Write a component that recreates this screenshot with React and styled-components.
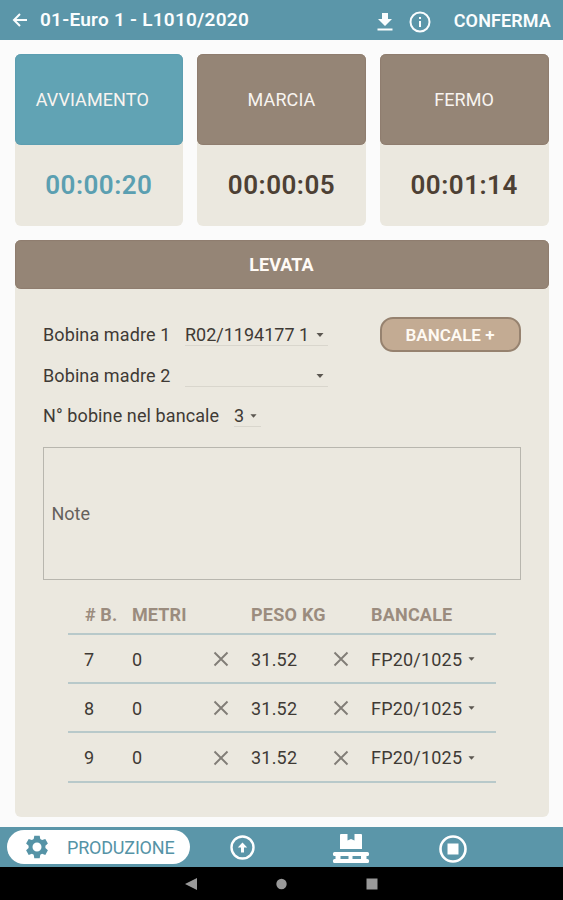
import React from "react";
import styled, { createGlobalStyle } from "styled-components";

const Global = createGlobalStyle`
  * { box-sizing: border-box; }
  body {
    margin: 0;
    background: #fbfbfb;
    font-family: Roboto, "Liberation Sans", sans-serif;
    font-size: 18px;
    color: #3f3a35;
  }
`;

const Screen = styled.div`
  width: 563px;
  height: 900px;
  display: flex;
  flex-direction: column;
  overflow: hidden;
`;

const TopBar = styled.header`
  height: 40px;
  flex: none;
  display: flex;
  align-items: center;
  padding: 0 12px;
  background: #5b96a9;
  color: #fafdfe;
  font-weight: 500;
  svg { flex: none; }
`;

const Title = styled.h1`
  margin: 0 auto 0 11px;
  padding-bottom: 1px;
  font-size: 19px;
  font-weight: 600;
  letter-spacing: 0.25px;
  white-space: nowrap;
`;

const IconGroup = styled.div`
  display: flex;
  align-items: center;
  gap: 15px;
  padding-top: 3px;
  margin-right: 23px;
`;

const ConfirmButton = styled.button`
  border: 0;
  padding: 0;
  background: none;
  color: inherit;
  font: 600 18px Roboto, sans-serif;
  letter-spacing: 0.12px;
`;

const Content = styled.main`
  flex: 1;
  display: flex;
  flex-direction: column;
  gap: 14px;
  padding: 14px 14.5px 10px 14.5px;
`;

const Timers = styled.section`
  display: grid;
  grid-template-columns: repeat(3, 1fr);
  gap: 14px;
  height: 172px;
`;

const TimerCard = styled.article`
  display: flex;
  flex-direction: column;
  background: #ebe8df;
  border-radius: 6px;
`;

const TimerName = styled.div`
  height: 91px;
  display: flex;
  align-items: center;
  justify-content: center;
  padding-right: ${(p) => (p.$active ? "13px" : "0")};
  border-radius: 6px;
  background: ${(p) => (p.$active ? "#61a3b4" : "#958576")};
  color: #f8f4f0;
  letter-spacing: 0.1px;
  box-shadow: inset 0 0 1px 0.5px ${(p) => (p.$active ? "#5899ad" : "#8a7768")};
`;

const TimerValue = styled.div`
  flex: 1;
  display: flex;
  align-items: center;
  justify-content: center;
  padding-bottom: 1px;
  font-size: 26px;
  font-weight: 600;
  letter-spacing: 0.5px;
  color: ${(p) => (p.$active ? "#5b9fb1" : "#4d4034")};
`;

const Panel = styled.section`
  flex: 1;
  display: flex;
  flex-direction: column;
  background: #ebe8df;
  border-radius: 6px;
`;

const PanelTitle = styled.h2`
  margin: 0;
  height: 49px;
  display: flex;
  align-items: center;
  justify-content: center;
  border-radius: 6px;
  background: #958576;
  box-shadow: inset 0 0 1px 0.5px #8a7768;
  color: #fffaf5;
  font-size: 18px;
  font-weight: 700;
`;

const PanelBody = styled.div`
  padding: 27px 28px 0 28.5px;
`;

const FormRow = styled.div`
  height: 40.7px;
  display: flex;
  align-items: flex-start;
`;

const Label = styled.label`
  width: ${(p) => p.$width}px;
  height: 38px;
  line-height: 38px;
  letter-spacing: 0.1px;
  white-space: nowrap;
`;

const Select = styled.div`
  width: ${(p) => p.$width}px;
  height: 30px;
  display: flex;
  align-items: flex-end;
  justify-content: space-between;
  padding-right: ${(p) => p.$pad}px;
  border-bottom: 1px solid #d9d6cd;
  line-height: 20px;
  svg { margin-bottom: 8px; }
`;

const PalletButton = styled.button`
  width: 141px;
  height: 35px;
  margin: 1px 0 0 auto;
  padding: 0;
  border: 2px solid #96826f;
  border-radius: 13px;
  background: #c3ab93;
  color: #fffaf3;
  font: 600 17px Roboto, sans-serif;
`;

const Note = styled.div`
  height: 133px;
  margin-top: 9px;
  display: flex;
  align-items: center;
  padding: 0 7.5px;
  border: 1px solid #b8b6ae;
  color: #65615c;
`;

const Table = styled.div`
  margin: 14px 24.5px 0 25px;
`;

const TableRow = styled.div`
  display: grid;
  grid-template-columns: 64px 80px 39px 81px 39px 1fr;
  align-items: center;
  height: ${(p) => (p.$head ? "41px" : "49.2px")};
  padding-top: ${(p) => (p.$head ? "2px" : "1px")};
  border-bottom: 2px solid #b8c9ca;
  color: ${(p) => (p.$head ? "#9b8c7e" : "inherit")};
  font-weight: ${(p) => (p.$head ? 700 : 400)};
  white-space: nowrap;
`;

const Cell = styled.span`
  display: flex;
  align-items: center;
  gap: 6px;
  padding-left: ${(p) => p.$indent || 0}px;
  letter-spacing: ${(p) => p.$spacing || "0.1px"};
`;

const TabBar = styled.nav`
  height: 40px;
  flex: none;
  display: flex;
  align-items: center;
  padding-left: 7px;
  background: #5b96a9;
  color: #fff;
`;

const ActiveTab = styled.div`
  width: 183px;
  height: 34px;
  display: flex;
  align-items: center;
  gap: 18px;
  padding-left: 18px;
  border-radius: 17px;
  background: #fff;
  color: #5593a6;
  letter-spacing: -0.2px;
`;

const Tab = styled.div`
  display: flex;
  margin-left: ${(p) => p.$gap}px;
  padding-top: ${(p) => p.$drop || 0}px;
`;

const SystemBar = styled.footer`
  height: 33px;
  flex: none;
  display: flex;
  align-items: center;
  justify-content: center;
  gap: 79px;
  background: #000;
  color: #999;
`;

const Caret = ({ small }) => (
  <svg width={small ? 7 : 8} height="4" viewBox="0 0 8 4">
    <path d="M0.5 0h7L4 4z" fill="#5b5751" />
  </svg>
);

const Cross = () => (
  <svg width="16" height="16" viewBox="0 0 16 16" fill="none" stroke="#817d77" strokeWidth="1.9">
    <path d="M1.5 1.5l13 13M14.5 1.5l-13 13" />
  </svg>
);

const timers = [
  { name: "AVVIAMENTO", value: "00:00:20", active: true },
  { name: "MARCIA", value: "00:00:05" },
  { name: "FERMO", value: "00:01:14" },
];

const reels = [7, 8, 9];

export default function App() {
  return (
    <Screen>
      <Global />
      <TopBar>
        <svg width="17" height="16" viewBox="0 0 17 16" fill="none" stroke="currentColor" strokeWidth="2">
          <path d="M15 8H2.5M8 2L2 8l6 6" />
        </svg>
        <Title>01-Euro 1 - L1010/2020</Title>
        <IconGroup>
          <svg width="18" height="20" viewBox="0 0 18 20" fill="currentColor">
            <path d="M6 1h6v6h4l-7 7-7-7h4zM1.5 16.5h15v2h-15z" />
          </svg>
          <svg width="22" height="22" viewBox="0 0 22 22" fill="none" stroke="currentColor" strokeWidth="2">
            <circle cx="11" cy="11" r="9.5" />
            <path d="M11 10v6M11 6v2" />
          </svg>
        </IconGroup>
        <ConfirmButton>CONFERMA</ConfirmButton>
      </TopBar>

      <Content>
        <Timers>
          {timers.map((t) => (
            <TimerCard key={t.name}>
              <TimerName $active={t.active}>{t.name}</TimerName>
              <TimerValue $active={t.active}>{t.value}</TimerValue>
            </TimerCard>
          ))}
        </Timers>

        <Panel>
          <PanelTitle>LEVATA</PanelTitle>
          <PanelBody>
            <FormRow>
              <Label $width={142}>Bobina madre 1</Label>
              <Select $width={143} $pad={4}>R02/1194177 1 <Caret /></Select>
              <PalletButton>BANCALE +</PalletButton>
            </FormRow>
            <FormRow>
              <Label $width={142}>Bobina madre 2</Label>
              <Select $width={143} $pad={4}><span /><Caret /></Select>
            </FormRow>
            <FormRow>
              <Label $width={191}>N° bobine nel bancale</Label>
              <Select $width={27} $pad={4}>3 <Caret small /></Select>
            </FormRow>
            <Note>Note</Note>
            <Table>
              <TableRow $head>
                <Cell $indent={17}># B.</Cell>
                <Cell>METRI</Cell>
                <Cell />
                <Cell $spacing="0.25px">PESO KG</Cell>
                <Cell />
                <Cell $spacing="0.2px">BANCALE</Cell>
              </TableRow>
              {reels.map((n) => (
                <TableRow key={n}>
                  <Cell $indent={16}>{n}</Cell>
                  <Cell>0</Cell>
                  <Cell $indent={1}><Cross /></Cell>
                  <Cell $spacing="0.2px">31.52</Cell>
                  <Cell $indent={1}><Cross /></Cell>
                  <Cell $spacing="0.2px">FP20/1025 <Caret small /></Cell>
                </TableRow>
              ))}
            </Table>
          </PanelBody>
        </Panel>
      </Content>

      <TabBar>
        <ActiveTab>
          <svg width="24" height="24" viewBox="0 0 24 24" fill="currentColor">
            <path
              fillRule="evenodd"
              d="M9.3 0.8h5.4l.6 3.3 1.8 1 3.2-1.1 2.6 4.6-2.5 2.2v2.2l2.5 2.3-2.6 4.6-3.2-1.1-1.8 1-.6 3.4H9.3l-.6-3.4-1.8-1-3.2 1.1-2.6-4.6L3.6 13V10.8L1.1 8.6 3.7 4l3.2 1.1 1.8-1zM12 7.5a4.5 4.5 0 1 0 0 9 4.5 4.5 0 0 0 0-9z"
            />
          </svg>
          PRODUZIONE
        </ActiveTab>
        <Tab $gap={40}>
          <svg width="25" height="25" viewBox="0 0 25 25" fill="none" stroke="currentColor" strokeWidth="2.4">
            <circle cx="12.5" cy="12.5" r="11" />
            <path d="M12.5 17.5V10.5" strokeWidth="3" />
            <path d="M7.8 12.5l4.7-5 4.7 5z" fill="currentColor" stroke="none" />
          </svg>
        </Tab>
        <Tab $gap={77} $drop={3}>
          <svg width="38" height="30" viewBox="0 0 38 30" fill="currentColor">
            <path d="M9 0h6.5v6.500l3.500-1.500 3.500 1.500V0H29a1 1 0 0 1 1 1v14H8V1a1 1 0 0 1 1-1z" />
            <rect x="1" y="18" width="36" height="4" rx="1.5" />
            <rect x="1" y="25" width="36" height="4" rx="1.5" />
            <path d="M3.5 21h5v5h-5zM16.500 21h4v5h-4zM29 21h5.500v5H29z" />
          </svg>
        </Tab>
        <Tab $gap={69} $drop={3}>
          <svg width="28" height="28" viewBox="0 0 28 28" fill="none" stroke="currentColor" strokeWidth="2.6">
            <circle cx="14" cy="14" r="12.5" />
            <path d="M8.5 8.5h11v11h-11z" fill="currentColor" stroke="none" />
          </svg>
        </Tab>
      </TabBar>

      <SystemBar>
        <svg width="12" height="12" viewBox="0 0 12 12" fill="currentColor"><path d="M12 0v12L0 6z" /></svg>
        <svg width="11" height="12" viewBox="0 0 11 12" fill="currentColor"><circle cx="5.5" cy="6" r="5.2" /></svg>
        <svg width="12" height="12" viewBox="0 0 12 12" fill="currentColor"><path d="M.5.5h11v11H.5z" /></svg>
      </SystemBar>
    </Screen>
  );
}
